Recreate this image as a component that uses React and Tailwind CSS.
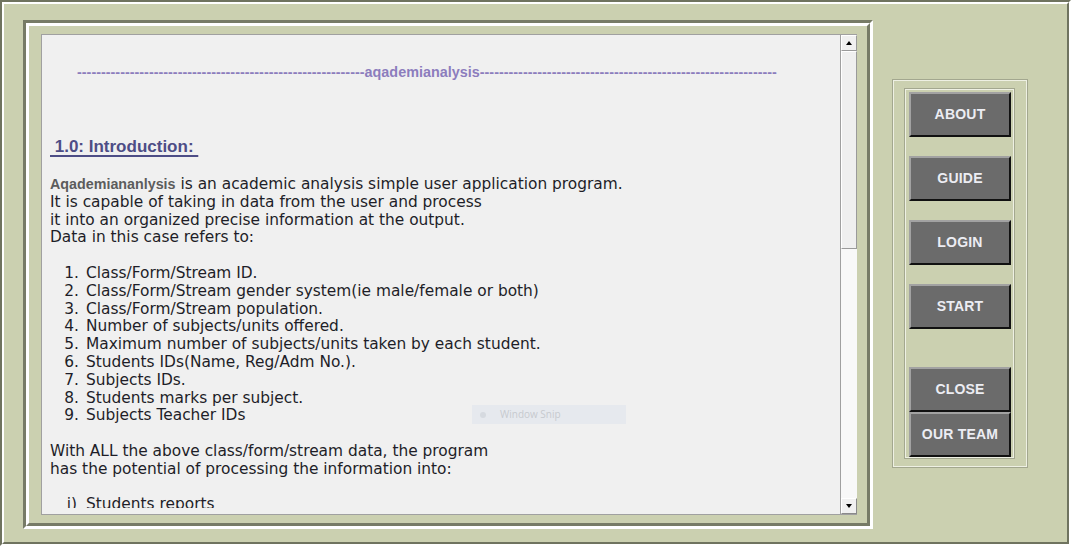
const listItems = [
  'Class/Form/Stream ID.',
  'Class/Form/Stream gender system(ie male/female or both)',
  'Class/Form/Stream population.',
  'Number of subjects/units offered.',
  'Maximum number of subjects/units taken by each student.',
  'Students IDs(Name, Reg/Adm No.).',
  'Subjects IDs.',
  'Students marks per subject.',
  'Subjects Teacher IDs',
];

function NavButton({ label, className = '' }) {
  return (
    <button
      className={`w-[102px] h-[45px] bg-[#6b6b6b] border-2 border-t-[#a2a2a2] border-l-[#a2a2a2] border-b-[#111] border-r-[#111] text-[#ecedf3] font-bold text-[14px] tracking-[0.2px] ${className}`}
      style={{ fontFamily: '"Liberation Sans", Arial, sans-serif' }}
    >
      {label}
    </button>
  );
}

function Scrollbar() {
  return (
    <div className="w-[16px] h-full flex flex-col bg-[#f3f3f3]">
      {/* up arrow */}
      <div className="h-[16px] bg-[#f0f0f0] border border-t-white border-l-white border-b-[#9a9a9a] border-r-[#9a9a9a] flex items-center justify-center">
        <div className="w-0 h-0 border-l-[3px] border-r-[3px] border-b-[4px] border-l-transparent border-r-transparent border-b-black" />
      </div>
      {/* thumb */}
      <div className="h-[198px] bg-[#efefef] border border-t-white border-l-white border-b-[#9a9a9a] border-r-[#9a9a9a]" />
      <div className="flex-1 bg-[#f8f8f8]" />
      {/* down arrow */}
      <div className="h-[16px] bg-[#f0f0f0] border border-t-white border-l-white border-b-[#8a8a8a] border-r-[#8a8a8a] flex items-center justify-center">
        <div className="w-0 h-0 border-l-[3px] border-r-[3px] border-t-[4px] border-l-transparent border-r-transparent border-t-black" />
      </div>
    </div>
  );
}

export default function App() {
  const body = { fontFamily: '"DejaVu Sans", Verdana, sans-serif' };
  const arial = { fontFamily: '"Liberation Sans", Arial, sans-serif' };

  return (
    <div className="w-[1071px] h-[546px] bg-[#cbd0b0] border-2 border-t-[#6f735f] border-l-[#6f735f] border-b-white border-r-white overflow-hidden">
      <div className="w-full h-full border-2 border-t-white border-l-white border-b-[#6f735f] border-r-[#6f735f] flex">
        {/* Text frame */}
        <div className="ml-[19px] mt-[16px] w-[850px] h-[509px] border-[3px] border-t-[#777b66] border-l-[#777b66] border-b-white border-r-white">
          <div className="w-full h-full border-[3px] border-t-white border-l-white border-b-[#777b66] border-r-[#777b66] pl-[12px] pt-[8px]">
            <div className="relative w-[816px] h-[481px] flex border border-[#a0a0a0] border-r-0">
              <div className="flex-1 bg-[#f0f0f0] text-[#1e1e28] border-r border-[#a0a0a0]">
                <div className="h-[473px] overflow-hidden">
                  {/* title line */}
                  <div
                    className="mt-[29px] ml-[35px] flex items-center h-[16px] text-[14.4px] font-bold text-[#8c7dbd] whitespace-nowrap leading-none"
                    style={arial}
                  >
                    {'-'.repeat(60)}aqademianalysis{'-'.repeat(62)}
                  </div>

                  {/* heading */}
                  <div className="mt-[56px] ml-[8px] h-[22px] flex items-center">
                    <span
                      className="text-[17px] font-bold text-[#4d4d86] underline underline-offset-[3px] decoration-[1.5px] whitespace-pre"
                      style={arial}
                    >
                      {' 1.0: Introduction: '}
                    </span>
                  </div>

                  {/* body */}
                  <div className="mt-[18px] ml-[8px] text-[15.4px] leading-[17.8px] whitespace-nowrap" style={body}>
                    <div>
                      <span className="font-bold text-[#5c5c5c] text-[14.3px]" style={arial}>
                        Aqademiananlysis
                      </span>{' '}
                      is an academic analysis simple user application program.
                    </div>
                    <div>It is capable of taking in data from the user and process</div>
                    <div>it into an organized precise information at the output.</div>
                    <div>Data in this case refers to:</div>
                    <div className="h-[17.8px]" />
                    {listItems.map((item, i) => (
                      <div key={i} className="flex">
                        <span className="w-[36px] text-right pr-[7px]">{i + 1}.</span>
                        <span>{item}</span>
                      </div>
                    ))}
                    <div className="h-[17.8px]" />
                    <div>With ALL the above class/form/stream data, the program</div>
                    <div>has the potential of processing the information into:</div>
                    <div className="h-[17.8px]" />
                    <div className="flex">
                      <span className="w-[36px] text-right pr-[9px]">i)</span>
                      <span>Students reports</span>
                    </div>
                  </div>
                </div>

                {/* ghost snip tooltip */}
                <div className="absolute left-[430px] top-[370px] w-[154px] h-[19px] bg-[#e6e9ee] flex items-center">
                  <span className="ml-[8px] w-[6px] h-[6px] rounded-full bg-[#d6dae0]" />
                  <span className="ml-[14px] text-[10px] text-[#c6c9ce]" style={{ fontFamily: '"Open Sans", sans-serif' }}>
                    Window Snip
                  </span>
                </div>
              </div>
              <Scrollbar />
            </div>
          </div>
        </div>

        {/* Button panel */}
        <div className="ml-[19px] mt-[75px] w-[136px] h-[389px] border border-[#a3a78f]">
          <div className="w-full h-full border border-[#eef0e3] pt-[7px] pl-[10px]">
            <div className="w-[111px] h-[371px] border border-[#a3a78f]">
              <div className="w-full h-full border border-[#eef0e3] pl-[3px] pt-[2px] flex flex-col">
                <NavButton label="ABOUT" />
                <NavButton label="GUIDE" className="mt-[19px]" />
                <NavButton label="LOGIN" className="mt-[19px]" />
                <NavButton label="START" className="mt-[19px]" />
                <NavButton label="CLOSE" className="mt-[38px]" />
                <NavButton label="OUR TEAM" className="mt-[0px]" />
              </div>
            </div>
          </div>
        </div>
      </div>
    </div>
  );
}
